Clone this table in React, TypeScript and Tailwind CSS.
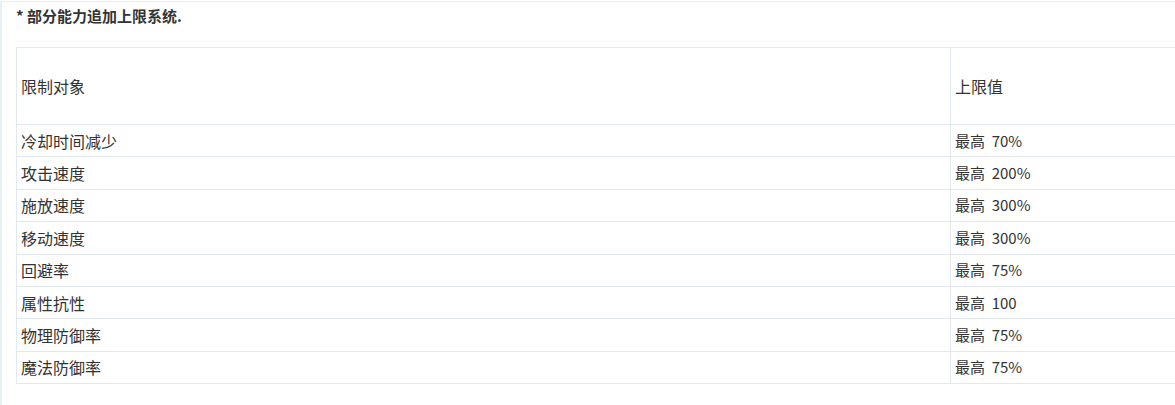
import React from 'react';

const rows: [string, string][] = [
  ['冷却时间减少', '最高 70%'],
  ['攻击速度', '最高 200%'],
  ['施放速度', '最高 300%'],
  ['移动速度', '最高 300%'],
  ['回避率', '最高 75%'],
  ['属性抗性', '最高 100'],
  ['物理防御率', '最高 75%'],
  ['魔法防御率', '最高 75%'],
];

const App: React.FC = () => {
  return (
    <div className="w-[1175px] h-[405px] overflow-hidden bg-white pt-px font-['Noto_Sans_CJK_SC',sans-serif] text-[#333]">
      <div className="h-[404px] border-l-2 border-t border-[#e8f0f5] pl-[14px]">
        {/* Title */}
        <div className="h-[40px] pt-[4px] border-b border-[#f6f9fb]">
          <p className="text-[15px] leading-[20px] font-bold">* 部分能力追加上限系统.</p>
        </div>

        {/* Limit table */}
        <table className="mt-[5px] w-[1200px] border-collapse text-[16px] leading-[20px] table-fixed">
          <colgroup>
            <col className="w-[934px]" />
            <col />
          </colgroup>
          <thead>
            <tr className="h-[77px]">
              <th className="border border-[#e1e9ef] px-[4px] text-left font-normal align-middle">限制对象</th>
              <th className="border border-[#e1e9ef] px-[4px] text-left font-normal align-middle">上限值</th>
            </tr>
          </thead>
          <tbody>
            {rows.map(([name, value]) => (
              <tr key={name} className="h-[32.4px]">
                <td className="border border-[#e1e9ef] px-[4px] align-middle">{name}</td>
                <td className="border border-[#e1e9ef] px-[4px] align-middle text-[15px] whitespace-pre">
                  {value.replace(' ', '  ')}
                </td>
              </tr>
            ))}
          </tbody>
        </table>
      </div>
    </div>
  );
};

export default App;
